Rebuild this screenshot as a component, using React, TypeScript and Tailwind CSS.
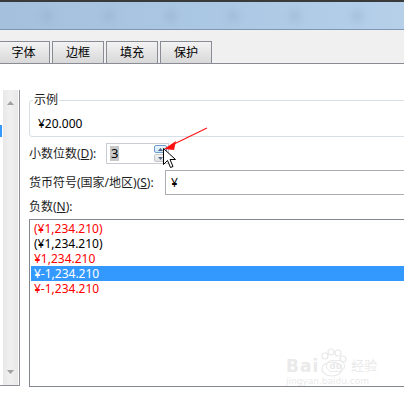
import React from "react";

const negatives = [
  { text: "(¥1,234.210)", color: "text-[#ff0000]" },
  { text: "(¥1,234.210)", color: "text-black" },
  { text: "¥1,234.210", color: "text-[#ff0000]" },
  { text: "¥-1,234.210", color: "text-white", selected: true },
  { text: "¥-1,234.210", color: "text-[#ff0000]" },
];

const tabs = ["字体", "边框", "填充", "保护"];

function TitleBar() {
  return (
    <div className="flex h-[30px] items-center justify-around border-t-2 border-b border-t-[#3a3a3a] border-b-[#7f97b2] bg-gradient-to-r from-[#a4c0dc] via-[#aac7e3] to-[#b6d0ea] px-4">
      {/* blurred window title, only soft spots are visible */}
      {[0, 1, 2, 3, 4, 5].map((i) => (
        <div key={i} className="h-[12px] w-[10px] rounded-full bg-[#8aa3bd] opacity-40 blur-[4px]" />
      ))}
    </div>
  );
}

function TabStrip() {
  return (
    <div className="flex h-[34px] items-end gap-[2px] border-b border-[#898c95] bg-[#f0f0f0] pl-0">
      {tabs.map((t, i) => (
        <div
          key={t}
          className={
            "flex h-[22px] items-center justify-center border border-b-0 border-[#898c95] bg-gradient-to-b from-[#f3f3f3] to-[#d8d8d8] text-[12px] text-black " +
            (i === 0 ? "-ml-[3px] w-[53px]" : "w-[52px]")
          }
        >
          {t}
        </div>
      ))}
    </div>
  );
}

function LeftList() {
  return (
    <div className="flex h-[296px] w-[20px] shrink-0 border-r border-b border-[#8c8f96] bg-white">
      <div className="mt-[35px] h-[12px] w-[2px] bg-[#3399ff]" />
      <div className="ml-[1px] flex w-[15px] flex-col items-center justify-between bg-gradient-to-r from-[#e8e8e8] via-[#f0f0f0] to-[#e8e8e8] py-[11px]">
        <svg width="7" height="4" viewBox="0 0 7 4">
          <path d="M0 4 L3.5 0 L7 4 Z" fill="#a0a0a0" />
        </svg>
        <svg width="7" height="4" viewBox="0 0 7 4">
          <path d="M0 0 L7 0 L3.5 4 Z" fill="#a0a0a0" />
        </svg>
      </div>
    </div>
  );
}

function Spin() {
  return (
    <div className="flex h-[21px] w-[63px] items-center border border-[#c9ccd2] bg-white pl-[3px]">
      <span className="h-[15px] bg-[#c8c8c8] px-[1px] text-[13px] leading-[15px] text-black">3</span>
      <div className="ml-auto mr-[1px] flex h-full flex-col justify-center gap-[1px]">
        <div className="flex h-[8px] w-[13px] items-center justify-center rounded-[2px] border border-[#6e9ccc] bg-gradient-to-b from-[#eaf6fd] to-[#c9e7f8]">
          <svg width="5" height="3" viewBox="0 0 5 3">
            <path d="M0 3 L2.5 0 L5 3 Z" fill="#4d6185" />
          </svg>
        </div>
        <div className="flex h-[8px] w-[13px] items-center justify-center rounded-[2px] border border-[#c4c6ca] bg-gradient-to-b from-[#f4f4f4] to-[#e0e0e0]">
          <svg width="5" height="3" viewBox="0 0 5 3">
            <path d="M0 0 L5 0 L2.5 3 Z" fill="#5a6b88" />
          </svg>
        </div>
      </div>
    </div>
  );
}

function Overlay() {
  return (
    <svg className="pointer-events-none absolute left-0 top-0" width="404" height="399">
      {/* red arrow */}
      <line x1="207" y1="128" x2="172" y2="145" stroke="#ff1a1a" strokeWidth="1.3" />
      <path d="M164 149 L176 141 L174 150 Z" fill="#ff1010" />
      {/* mouse pointer */}
      <path
        d="M163.5 148.5 L163.5 164.5 L167.5 160.5 L170.5 167.5 L173 166.5 L170 159.5 L175.5 159.5 Z"
        fill="#ffffff"
        stroke="#000000"
        strokeWidth="1"
        strokeLinejoin="round"
      />
      {/* baidu paw watermark */}
      <g fill="none" stroke="#e8e8e8" strokeWidth="1.2">
        <ellipse cx="332" cy="369" rx="10" ry="7" />
        <circle cx="325" cy="356" r="3" />
        <circle cx="331" cy="352" r="3" />
        <circle cx="338" cy="353" r="3" />
        <circle cx="343" cy="359" r="3" />
      </g>
    </svg>
  );
}

export default function App() {
  return (
    <div className="relative h-[399px] w-[404px] overflow-hidden bg-white font-['Noto_Sans','Noto_Sans_CJK_SC',sans-serif] text-[12px] text-[#1e1e1e]">
      <TitleBar />
      <TabStrip />

      <div className="flex pt-[26px]">
        <LeftList />

        <div className="ml-[9px] flex w-[420px] shrink-0 flex-col">
          {/* sample group */}
          <div className="relative mt-[10px] h-[37px] rounded-[3px] border border-[#d5dfe5] pl-[8px] pt-[14px]">
            <span className="absolute -top-[8px] left-[3px] bg-white px-[1px] leading-[14px]">示例</span>
            <span className="text-[12px] leading-[16px] text-black">¥20.000</span>
          </div>

          <div className="mt-[6px] flex items-center">
            <span className="w-[77px]">
              小数位数(<span className="underline">D</span>):
            </span>
            <Spin />
          </div>

          <div className="mt-[6px] flex items-center">
            <span className="w-[136px]">
              货币符号(国家/地区)(<span className="underline">S</span>):
            </span>
            <div className="flex h-[25px] flex-1 items-center border border-[#abadb3] bg-white pl-[5px] text-[12px] text-black">
              ¥
            </div>
          </div>

          <div className="mt-[4px] h-[16px] leading-[16px]">
            负数(<span className="underline">N</span>):
          </div>

          <div className="mt-[4px] h-[168px] border border-[#828790] bg-white px-[1px] pt-[1px]">
            {negatives.map((n, i) => (
              <div
                key={i}
                className={
                  "flex h-[15px] items-center overflow-hidden pl-[3px] text-[12px] leading-[14px] " +
                  n.color +
                  (n.selected ? " bg-[#3399ff]" : "")
                }
              >
                {n.text}
              </div>
            ))}
          </div>
        </div>
      </div>

      {/* watermark */}
      <div className="pointer-events-none absolute left-[286px] top-[356px] flex flex-col font-['DejaVu_Sans','Noto_Sans_CJK_SC',sans-serif] text-[#eaeaea]">
        <div className="flex items-center">
          <span className="text-[17px] font-bold leading-[20px] tracking-[1px]">Bai</span>
          <span className="ml-[7px] rounded-full border border-[#eaeaea] px-[2px] text-[9px] font-bold leading-[10px]">du</span>
          <span className="ml-[6px] text-[13px] leading-[20px]">经验</span>
        </div>
        <span className="text-[9px] leading-[11px]">jingyan.baidu.com</span>
      </div>

      <Overlay />
    </div>
  );
}
